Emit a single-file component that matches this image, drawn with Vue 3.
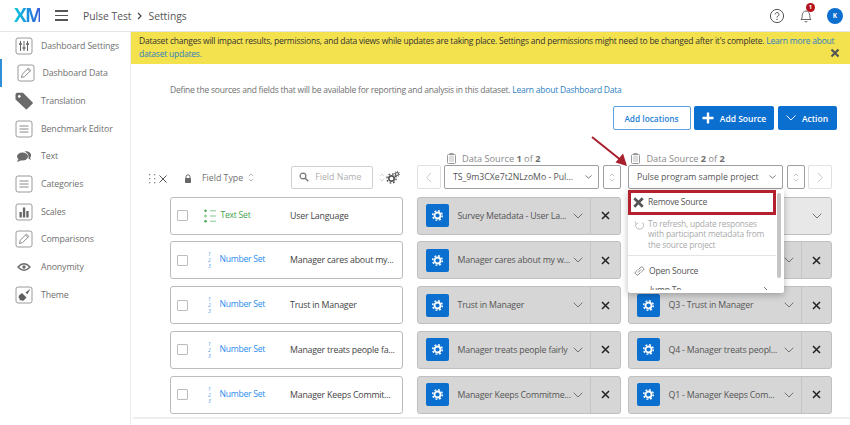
<script setup>
const navItems = [
  { label: 'Dashboard Settings', icon: 'sliders' },
  { label: 'Dashboard Data', icon: 'pencil', active: true },
  { label: 'Translation', icon: 'tag' },
  { label: 'Benchmark Editor', icon: 'lines' },
  { label: 'Text', icon: 'chat' },
  { label: 'Categories', icon: 'lines' },
  { label: 'Scales', icon: 'bars' },
  { label: 'Comparisons', icon: 'pencil' },
  { label: 'Anonymity', icon: 'eye' },
  { label: 'Theme', icon: 'brush' }
]

const rows = [
  { type: 'Text Set', name: 'User Language', s1: 'Survey Metadata - User La...', s2: '', light: true },
  { type: 'Number Set', name: 'Manager cares about my...', s1: 'Manager cares about my w...', s2: '' },
  { type: 'Number Set', name: 'Trust in Manager', s1: 'Trust in Manager', s2: 'Q3 - Trust in Manager' },
  { type: 'Number Set', name: 'Manager treats people fa...', s1: 'Manager treats people fairly', s2: 'Q4 - Manager treats peopl...' },
  { type: 'Number Set', name: 'Manager Keeps Commit...', s1: 'Manager Keeps Commitme...', s2: 'Q1 - Manager Keeps Com...' }
]
</script>

<template>
  <div class="page">
    <header class="topbar">
      <span class="logo">XM</span>
      <div class="burger"><i></i><i></i><i></i></div>
      <div class="crumbs">
        <span>Pulse Test</span>
        <svg class="crumb-sep" width="6" height="8" viewBox="0 0 6 8"><path d="M1 1l3 3-3 3" fill="none" stroke="#444" stroke-width="1.2" /></svg>
        <span>Settings</span>
      </div>
      <div class="top-right">
        <svg width="16" height="16" viewBox="0 0 16 16">
          <circle cx="8" cy="8" r="6.6" fill="none" stroke="#555" stroke-width="1" />
          <path d="M6.2 6.4a1.9 1.9 0 1 1 2.9 1.6c-.7.4-1.1.8-1.1 1.6" fill="none" stroke="#555" stroke-width="1" />
          <circle cx="8" cy="11.4" r=".7" fill="#555" />
        </svg>
        <div class="bell">
          <svg width="14" height="16" viewBox="0 0 14 16">
            <path d="M2 11.5c1-1 1.2-2 1.2-4C3.200 5 4.800 3 7 3s3.800 2 3.800 4.500c0 2 .2 3 1.200 4z" fill="none" stroke="#666" stroke-width="1" />
            <path d="M5.600 13a1.500 1.500 0 0 0 2.800 0" fill="none" stroke="#666" stroke-width="1" />
          </svg>
          <span class="badge">1</span>
        </div>
        <span class="avatar">K</span>
      </div>
    </header>

    <div class="body">
      <aside class="sidebar">
        <div v-for="item in navItems" :key="item.label" class="nav-item" :class="{ active: item.active }">
          <svg class="nav-icon" width="18" height="18" viewBox="0 0 18 18">
            <rect v-if="['sliders', 'pencil', 'lines', 'bars', 'brush'].includes(item.icon)" x="1" y="1" width="16" height="16" rx="2" fill="#fff" stroke="#9a9a9a" />
            <g v-if="item.icon === 'sliders'" stroke="#666" stroke-width="1" fill="#666">
              <path d="M5.500 4v10M9 4v10M12.500 4v10" />
              <path d="M4 7h3M7.500 11h3M11 7h3" stroke-width="1.600" />
            </g>
            <path v-else-if="item.icon === 'pencil'" d="M4.500 13.500l.8-3.200 6.100-6.300 2.400 2.400-6.200 6.200z M10.500 5l2.400 2.400" fill="none" stroke="#8a8a8a" />
            <path v-else-if="item.icon === 'tag'" d="M.5 2.500Q.5 .8 2.200 .8h5.800l9.500 9.500q.7.700 0 1.400l-5.400 5.400q-.7.700-1.400 0L.5 7.500z M4.300 3a1.400 1.400 0 1 0 .01 0z" fill="#6a6a6a" fill-rule="evenodd" />
            <path v-else-if="item.icon === 'lines'" d="M4.500 6h9M4.500 9h9M4.500 12h9" stroke="#8a8a8a" stroke-width="1" />
            <g v-else-if="item.icon === 'chat'" fill="#6a6a6a">
              <ellipse cx="7.500" cy="9.500" rx="5.500" ry="4" />
              <path d="M3.500 12l-1.500 3 4-1.500z" />
              <path d="M9.500 4.500c3-1 6 .5 6.500 3 .2 1.500-.2 2.600-1 3.400l1 2-2.500-1.200c.6-3-1-6-4-7.200z" />
            </g>
            <path v-else-if="item.icon === 'bars'" d="M4.500 9h2.300v5.500H4.500zM7.900 4.500h2.300v10H7.900zM11.300 8h2.300v6.500h-2.300z" fill="#666" />
            <g v-else-if="item.icon === 'eye'">
              <path d="M3 9q6-6.500 12 0q-6 6.500-12 0z" fill="none" stroke="#6a6a6a" stroke-width="1.400" />
              <circle cx="9" cy="9" r="1.700" fill="#6a6a6a" />
            </g>
            <g v-else-if="item.icon === 'brush'" fill="#5f5f5f">
              <path d="M10.500 6.500l1.800 1.800 2.800-4.700-.4-.4z" />
              <path d="M4 9.500l3-2.500 4.500 4.500-2.800 3q-2 .5-2.700-.5l-1.300.5q-.5-1 .3-1.800L3.500 12z" />
            </g>
          </svg>
          <span>{{ item.label }}</span>
        </div>
      </aside>

      <main class="main">
        <div class="banner">
          <p>Dataset changes will impact results, permissions, and data views while updates are taking place. Settings and permissions might need to be changed after it's complete. <a>Learn more about dataset updates.</a></p>
          <svg class="banner-x" width="10" height="10" viewBox="0 0 10 10"><path d="M1.500 1.500l7 7M8.500 1.500l-7 7" stroke="#555" stroke-width="2.200" /></svg>
        </div>

        <p class="intro">Define the sources and fields that will be available for reporting and analysis in this dataset. <a>Learn about Dashboard Data</a></p>

        <div class="actions">
          <button class="btn ghost">Add locations</button>
          <button class="btn solid add">
            <svg width="12" height="12" viewBox="0 0 12 12"><path d="M6 .5v11M.5 6h11" stroke="#fff" stroke-width="2.400" /></svg>
            Add Source
          </button>
          <button class="btn solid act">
            <svg width="10" height="6" viewBox="0 0 10 6"><path d="M.5 .5L5 5 9.500 .5" fill="none" stroke="#fff" stroke-width=".9" /></svg>
            Action
          </button>
        </div>

        <div class="labels">
          <div class="source-label first">
            <svg width="9" height="11" viewBox="0 0 9 11"><rect x=".5" y="1.500" width="8" height="9" rx="1" fill="none" stroke="#999" /><path d="M2 4h5M2 6h5M2 8h5" stroke="#aaa" stroke-width=".8" /><rect x="2.500" y="0" width="4" height="2.200" fill="#999" /></svg>
            <span>Data Source <b>1</b> of <b>2</b></span>
          </div>
          <div class="source-label second">
            <svg width="9" height="11" viewBox="0 0 9 11"><rect x=".5" y="1.500" width="8" height="9" rx="1" fill="none" stroke="#999" /><path d="M2 4h5M2 6h5M2 8h5" stroke="#aaa" stroke-width=".8" /><rect x="2.500" y="0" width="4" height="2.200" fill="#999" /></svg>
            <span>Data Source <b>2</b> of <b>2</b></span>
          </div>
        </div>

        <div class="toolbar">
          <div class="field-tools">
            <svg class="dots" width="7" height="10" viewBox="0 0 7 10" fill="#888"><rect x="0" y="0" width="1.300" height="1.300" /><rect x="5" y="0" width="1.300" height="1.300" /><rect x="0" y="4" width="1.300" height="1.300" /><rect x="5" y="4" width="1.300" height="1.300" /><rect x="0" y="8" width="1.300" height="1.300" /><rect x="5" y="8" width="1.300" height="1.300" /></svg>
            <svg class="clear" width="8" height="8" viewBox="0 0 8 8"><path d="M.5 .5l7 7M7.500 .5l-7 7" stroke="#555" stroke-width="1" /></svg>
            <svg class="lock" width="8" height="9" viewBox="0 0 8 9"><path d="M2 4V2.800a2 2 0 0 1 4 0V4" fill="none" stroke="#666" /><rect x="1" y="4" width="6" height="5" rx=".8" fill="#666" /></svg>
            <span class="field-type">Field Type</span>
            <svg class="sorter" width="6" height="9" viewBox="0 0 6 9"><path d="M.8 3.200L3 1l2.200 2.200M.8 5.800L3 8l2.200-2.200" fill="none" stroke="#aaa" stroke-width=".8" /></svg>
            <div class="search">
              <svg width="10" height="10" viewBox="0 0 10 10"><circle cx="4" cy="4" r="2.900" fill="none" stroke="#777" stroke-width="1.200" /><path d="M6.200 6.200L9.300 9.300" stroke="#777" stroke-width="1.500" /></svg>
              <span>Field Name</span>
            </div>
            <svg class="sorter light" width="6" height="9" viewBox="0 0 6 9"><path d="M.8 3.200L3 1l2.200 2.200M.8 5.800L3 8l2.200-2.200" fill="none" stroke="#ccc" stroke-width=".8" /></svg>
            <svg class="gears" width="14" height="13" viewBox="0 0 14 13">
              <circle cx="5.500" cy="7.500" r="2.700" fill="none" stroke="#555" stroke-width="1.700" />
              <circle cx="5.500" cy="7.500" r="4.600" fill="none" stroke="#555" stroke-width="1.400" stroke-dasharray="1.800 1.800" />
              <circle cx="11" cy="3" r="1.500" fill="none" stroke="#555" stroke-width="1.100" />
              <circle cx="11" cy="3" r="2.600" fill="none" stroke="#555" stroke-width=".9" stroke-dasharray="1 1" />
            </svg>
          </div>

          <div class="source-tools first">
            <button class="square nav">
              <svg width="6" height="11" viewBox="0 0 6 11"><path d="M5 .8L.8 5.500 5 10.200" fill="none" stroke="#ccc" /></svg>
            </button>
            <div class="picker">
              <span>TS_9m3CXe7t2NLzoMo - Pul...</span>
              <svg width="7" height="4" viewBox="0 0 7 4"><path d="M.5 .5l3 2.700 3-2.700" fill="none" stroke="#777" /></svg>
            </div>
            <button class="square sort">
              <svg width="6" height="9" viewBox="0 0 6 9"><path d="M.8 3.200L3 1l2.200 2.200M.8 5.800L3 8l2.200-2.200" fill="none" stroke="#bbb" stroke-width=".8" /></svg>
            </button>
          </div>

          <div class="source-tools second">
            <div class="picker">
              <span>Pulse program sample project</span>
              <svg width="7" height="4" viewBox="0 0 7 4"><path d="M.5 .5l3 2.700 3-2.700" fill="none" stroke="#777" /></svg>
            </div>
            <button class="square sort">
              <svg width="6" height="9" viewBox="0 0 6 9"><path d="M.8 3.200L3 1l2.200 2.200M.8 5.800L3 8l2.200-2.200" fill="none" stroke="#bbb" stroke-width=".8" /></svg>
            </button>
            <button class="square nav">
              <svg width="6" height="11" viewBox="0 0 6 11"><path d="M1 .8l4.200 4.700L1 10.200" fill="none" stroke="#ccc" /></svg>
            </button>

            <div class="menu">
              <div class="menu-list">
                <div class="menu-remove">
                  <svg width="11" height="11" viewBox="0 0 11 11"><path d="M1.300 1.300l8.400 8.400M9.700 1.300L1.300 9.700" stroke="#555" stroke-width="2.700" /></svg>
                  <span>Remove Source</span>
                </div>
                <div class="menu-refresh">
                  <svg width="10" height="10" viewBox="0 0 10 10"><path d="M8.500 2.500a4 4 0 1 1-6.500 1" fill="none" stroke="#bbb" /><path d="M1 1l1 3 2.500-1" fill="none" stroke="#bbb" stroke-width=".7" /></svg>
                  <span>To refresh, update responses with participant metadata from the source project</span>
                </div>
                <div class="menu-open">
                  <svg width="11" height="10" viewBox="0 0 11 10"><path d="M4.500 3.500L6.800 1.200q.8-.7 1.600 0l1.200 1.200q.7.800 0 1.600L7.500 6M6.500 6.500L4.200 8.800q-.8.700-1.600 0L1.400 7.600q-.7-.8 0-1.600L3.500 4M4 6.500L7 3.500" fill="none" stroke="#777" stroke-width=".9" /></svg>
                  <span>Open Source</span>
                </div>
                <div class="menu-jump">
                  <span>Jump To</span>
                  <svg width="5" height="8" viewBox="0 0 5 8"><path d="M1 1l3 3-3 3" fill="none" stroke="#777" /></svg>
                </div>
              </div>
              <div class="menu-track"><i></i></div>
            </div>
          </div>
        </div>

        <div class="rows">
          <div v-for="row in rows" :key="row.name" class="row">
            <div class="field-card">
              <span class="check"></span>
              <div class="type" :class="row.type === 'Text Set' ? 'is-text' : 'is-number'">
                <svg v-if="row.type === 'Text Set'" width="13" height="14" viewBox="0 0 13 14">
                  <circle cx="1.500" cy="1.800" r="1.200" fill="#3fa34d" />
                  <circle cx="1.500" cy="7" r="1" fill="none" stroke="#3fa34d" stroke-width=".7" />
                  <circle cx="1.500" cy="12.200" r="1.200" fill="#3fa34d" />
                  <path d="M6 1.800h6M6 7h6M6 12.200h6" stroke="#7cc285" stroke-width=".9" />
                </svg>
                <div v-else class="nums"><i>1</i><i>2</i><i>3</i></div>
                <span>{{ row.type }}</span>
              </div>
              <span class="field-name">{{ row.name }}</span>
            </div>

            <div class="source-card">
              <span class="gear">
                <svg width="13" height="13" viewBox="0 0 13 13">
                  <circle cx="6.500" cy="6.500" r="3" fill="none" stroke="#fff" stroke-width="1.800" />
                  <circle cx="6.500" cy="6.500" r="4.800" fill="none" stroke="#fff" stroke-width="1.500" stroke-dasharray="1.900 1.870" />
                </svg>
              </span>
              <span class="source-name">{{ row.s1 }}</span>
              <svg class="chev" width="10" height="6" viewBox="0 0 10 6"><path d="M.7 .7L5 5l4.300-4.300" fill="none" stroke="#666" stroke-width=".9" /></svg>
              <span class="remove">
                <svg width="9" height="9" viewBox="0 0 9 9"><path d="M1 1l7 7M8 1l-7 7" stroke="#222" stroke-width="1.500" /></svg>
              </span>
            </div>

            <div class="source-card" :class="{ light: row.light }">
              <span class="gear">
                <svg width="13" height="13" viewBox="0 0 13 13">
                  <circle cx="6.500" cy="6.500" r="3" fill="none" stroke="#fff" stroke-width="1.800" />
                  <circle cx="6.500" cy="6.500" r="4.800" fill="none" stroke="#fff" stroke-width="1.500" stroke-dasharray="1.900 1.870" />
                </svg>
              </span>
              <span class="source-name">{{ row.s2 }}</span>
              <svg v-if="!row.light" class="chev" width="10" height="6" viewBox="0 0 10 6"><path d="M.7 .7L5 5l4.300-4.300" fill="none" stroke="#666" stroke-width=".9" /></svg>
              <span class="remove">
                <svg v-if="row.light" width="10" height="6" viewBox="0 0 10 6"><path d="M.7 .7L5 5l4.300-4.300" fill="none" stroke="#666" stroke-width=".9" /></svg>
                <svg v-else width="9" height="9" viewBox="0 0 9 9"><path d="M1 1l7 7M8 1l-7 7" stroke="#222" stroke-width="1.500" /></svg>
              </span>
            </div>
          </div>
        </div>

        <div class="foot-line"></div>
      </main>
    </div>

    <svg class="arrow" width="42" height="34" viewBox="0 0 42 34">
      <path d="M2 2L32 26" stroke="#a81f2d" stroke-width="2" />
      <path d="M37 31L25.500 27.500 33 18.500z" fill="#a81f2d" />
    </svg>
  </div>
</template>

<style>
html,
body {
  margin: 0;
  background: #fff;
}
</style>

<style scoped>
.page {
  position: relative;
  width: 850px;
  height: 425px;
  overflow: hidden;
  background: #fff;
  font-family: "Open Sans", "Liberation Sans", sans-serif;
  font-size: 9px;
  color: #555;
}

p {
  margin: 0;
}

button {
  font-family: inherit;
  padding: 0;
}

a {
  color: #2f7fc1;
}

/* top bar */
.topbar {
  display: flex;
  align-items: center;
  height: 31px;
  border-bottom: 1px solid #e6e6e6;
  box-sizing: content-box;
}

.logo {
  width: 26px;
  margin-left: 14px;
  font-size: 19px;
  font-weight: 700;
  letter-spacing: -1.6px;
  line-height: 1;
  background: linear-gradient(90deg, #10c8d8, #1c8fe0 55%, #3a5fd6);
  -webkit-background-clip: text;
  background-clip: text;
  color: transparent;
}

.burger {
  display: flex;
  flex-direction: column;
  gap: 3px;
  width: 13px;
  margin-left: 15px;
}

.burger i {
  height: 1.400px;
  background: #555;
}

.crumbs {
  display: flex;
  align-items: center;
  gap: 5.500px;
  margin-left: 15px;
  font-size: 10.300px;
  color: #555;
}

.top-right {
  display: flex;
  align-items: center;
  margin-left: auto;
  margin-right: 7px;
  gap: 13px;
}

.bell {
  position: relative;
  display: flex;
  margin-left: 1px;
  margin-right: 1px;
}

.badge {
  position: absolute;
  top: -5px;
  left: 7px;
  width: 9px;
  height: 9px;
  border-radius: 50%;
  background: #b5121b;
  color: #fff;
  font-size: 6px;
  font-weight: 700;
  line-height: 9px;
  text-align: center;
}

.avatar {
  width: 16px;
  height: 16px;
  border-radius: 50%;
  background: #0b6fd0;
  color: #fff;
  font-size: 6.500px;
  font-weight: 700;
  line-height: 16px;
  text-align: center;
}

.body {
  display: flex;
  height: 393px;
}

/* sidebar */
.sidebar {
  width: 130px;
  flex: none;
  margin-top: -0.300px;
  border-right: 1px solid #ececec;
}

.nav-item {
  display: flex;
  align-items: center;
  gap: 8px;
  height: 27.700px;
  padding-left: 15px;
  color: #707070;
  font-size: 8.800px;
  letter-spacing: -0.130px;
}

.nav-item.active {
  padding-left: 16.500px;
  box-shadow: inset 2px 0 0 #2f8fd8;
}

/* banner */
.main {
  flex: 1;
  min-width: 0;
}

.banner {
  position: relative;
  height: 32px;
  box-sizing: border-box;
  padding: 3px 14px 0 8px;
  background: #f3e14d;
  color: #333;
  font-size: 8.500px;
  letter-spacing: -0.220px;
  line-height: 12.500px;
}

.banner-x {
  position: absolute;
  right: 10px;
  bottom: 6px;
}

.intro {
  padding: 20px 0 0 39px;
  font-size: 8.500px;
  letter-spacing: -0.220px;
  line-height: 12px;
  color: #707070;
}

.actions {
  display: flex;
  justify-content: flex-end;
  gap: 3.500px;
  margin-top: 10px;
  padding-right: 13.500px;
}

.btn {
  display: flex;
  align-items: center;
  justify-content: center;
  height: 24px;
  border-radius: 2px;
  font-size: 8.500px;
  font-weight: 600;
}

.ghost {
  width: 78px;
  background: #fff;
  border: 1px solid #5ba3e6;
  color: #1f7ed6;
  font-size: 8.300px;
}

.solid {
  border: none;
  background: #0b6fd0;
  color: #fff;
}

.add {
  width: 80px;
  gap: 6px;
}

.act {
  width: 59px;
  gap: 6px;
}

.labels {
  display: flex;
  margin-top: 21.500px;
  height: 13.500px;
  color: #8a8a8a;
  font-size: 9.200px;
}

.source-label {
  display: flex;
  align-items: center;
  gap: 6px;
}

.source-label b {
  font-weight: 700;
  color: #707070;
}

.source-label.first {
  margin-left: 316px;
}

.source-label.second {
  margin-left: 91px;
}

/* toolbar */
.toolbar {
  display: flex;
  align-items: center;
  height: 24px;
}

.field-tools {
  display: flex;
  align-items: center;
  width: 286px;
  padding-left: 18px;
  box-sizing: border-box;
}

.dots,
.clear,
.lock {
  margin-top: 3px;
}

.clear {
  margin-left: 3px;
}

.lock {
  margin-left: 17px;
}

.field-type {
  margin-left: 10px;
  margin-top: 1px;
  font-size: 8.800px;
  color: #707070;
}

.sorter {
  margin-left: 5px;
}

.sorter.light {
  margin-left: 6px;
}

.search {
  display: flex;
  align-items: center;
  gap: 6.500px;
  width: 82px;
  height: 23px;
  margin-left: 36.500px;
  padding-left: 7px;
  box-sizing: border-box;
  border: 1px solid #d0d0d0;
  border-radius: 2px;
  color: #b0b0b0;
  font-size: 8.800px;
}

.gears {
  margin-left: 1px;
}

.source-tools {
  position: relative;
  display: flex;
  align-items: stretch;
  width: 204px;
  height: 24px;
  flex: none;
}

.source-tools.first {
  margin-right: 7px;
}

.picker {
  display: flex;
  align-items: center;
  justify-content: space-between;
  flex: 1;
  min-width: 0;
  padding: 0 6px 0 8px;
  border: 1px solid #9f9f9f;
  border-radius: 2px;
  color: #555;
  font-size: 8.700px;
  white-space: nowrap;
}

.square {
  display: flex;
  align-items: center;
  justify-content: center;
  background: #fff;
  flex: none;
  border-radius: 2px;
}

.square.sort {
  width: 18px;
  border: 1px solid #9f9f9f;
}

.square.nav {
  width: 24px;
  border: 1px solid #e0e0e0;
}

.first .square.nav {
  margin-right: 3px;
}

.first .square.sort {
  margin-left: 4px;
}

.second .square.sort {
  margin: 0 3px 0 4px;
}

/* dropdown */
.menu {
  position: absolute;
  top: 24.500px;
  left: 0;
  z-index: 3;
  display: flex;
  width: 156px;
  height: 103px;
  overflow: hidden;
  background: #fff;
  border-radius: 0 0 2px 2px;
  box-shadow: 0 2px 7px rgba(0, 0, 0, 0.28);
}

.menu-list {
  width: 148px;
  height: 100px;
  overflow: hidden;
  flex: none;
}

.menu-remove {
  display: flex;
  align-items: center;
  gap: 4px;
  height: 25px;
  box-sizing: border-box;
  padding-left: 2px;
  border: 3px solid #b5202f;
  color: #555;
  font-size: 8.600px;
  letter-spacing: -0.250px;
}

.menu-refresh {
  display: flex;
  gap: 4px;
  height: 41px;
  box-sizing: border-box;
  padding: 4px 6px 0 6px;
  border-bottom: 1px solid #e4e4e4;
  color: #aaa;
  font-size: 8.400px;
  letter-spacing: -0.200px;
  line-height: 10.500px;
}

.menu-refresh svg {
  flex: none;
  margin-top: 1px;
}

.menu-open {
  display: flex;
  align-items: center;
  gap: 4px;
  height: 27px;
  padding: 3px 0 0 6px;
  box-sizing: border-box;
  color: #555;
  font-size: 8.600px;
  letter-spacing: -0.250px;
}

.menu-jump {
  display: flex;
  align-items: center;
  justify-content: space-between;
  height: 14px;
  padding: 0 8px 0 22px;
  color: #555;
  font-size: 8.600px;
  letter-spacing: -0.250px;
}

.menu-track {
  flex: 1;
  padding: 3px 3px 0 1px;
}

.menu-track i {
  display: block;
  height: 85px;
  border-radius: 2px;
  background: #c4c4c4;
}

/* rows */
.rows {
  display: flex;
  flex-direction: column;
  gap: 6.800px;
  margin-top: 7.500px;
}

.row {
  display: flex;
  height: 38px;
  padding-left: 39px;
}

.field-card {
  display: flex;
  align-items: center;
  width: 233px;
  margin-right: 14px;
  box-sizing: border-box;
  border: 1px solid #bcbcbc;
  border-radius: 3px;
  background: #fff;
  flex: none;
}

.check {
  width: 11px;
  height: 11px;
  margin-left: 6px;
  box-sizing: border-box;
  border: 1px solid #bdbdbd;
  border-radius: 1px;
  flex: none;
}

.type {
  display: flex;
  align-items: center;
  width: 102px;
  font-size: 8.600px;
  letter-spacing: -0.250px;
  flex: none;
}

.is-text {
  color: #3fa34d;
  padding-left: 15.500px;
  gap: 4px;
  box-sizing: border-box;
}

.is-number {
  color: #2b8cf0;
  padding-left: 20px;
  gap: 8px;
  box-sizing: border-box;
}

.type span {
  margin-top: -2px;
}

.nums {
  display: flex;
  flex-direction: column;
  width: 3.500px;
  color: #3d97ee;
  font-size: 5px;
  line-height: 6px;
}

.field-name {
  color: #444;
  font-size: 8.800px;
  letter-spacing: -0.200px;
  white-space: nowrap;
}

.source-card {
  display: flex;
  align-items: center;
  position: relative;
  width: 204px;
  flex: none;
  margin-right: 7px;
  box-sizing: border-box;
  border: 1px solid #c0c0c0;
  border-radius: 3px;
  background: #d6d6d6;
}

.source-card.light {
  background: #e8e8e8;
}

.gear {
  display: flex;
  align-items: center;
  justify-content: center;
  width: 23px;
  height: 23px;
  margin-left: 8px;
  border-radius: 2px;
  background: #0b6fd0;
  flex: none;
}

.source-name {
  margin-left: 8.500px;
  width: 113px;
  color: #555;
  font-size: 8.800px;
  letter-spacing: -0.200px;
  white-space: nowrap;
  flex: none;
}

.chev {
  margin-left: 2px;
}

.remove {
  position: absolute;
  top: 0;
  bottom: 0;
  right: 0;
  display: flex;
  align-items: center;
  justify-content: center;
  width: 29px;
  border-left: 1px solid #c4c4c4;
}

.light .remove {
  border-left: none;
}

.foot-line {
  height: 2px;
  margin: 3px 0 0 2px;
  background: #eee;
}

.arrow {
  position: absolute;
  left: 590px;
  top: 135px;
  z-index: 4;
}
</style>
